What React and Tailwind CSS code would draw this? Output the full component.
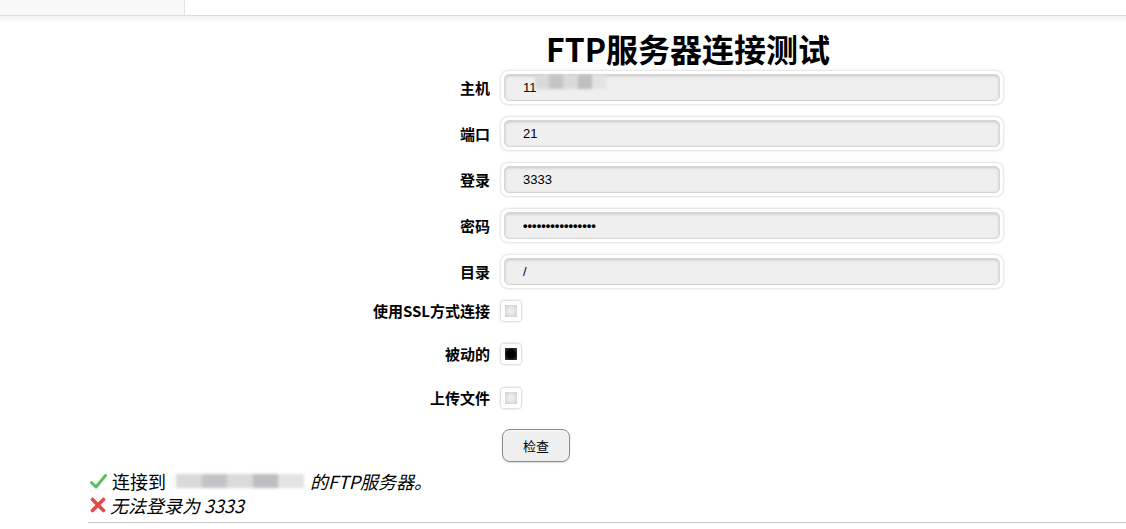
import React from 'react';

const Field = ({ label, children, className = '' }) => (
    <div className={`flex items-center ${className}`}>
        <div className="w-[122px] text-right text-[15px] leading-[20px] font-bold text-black">{label}</div>
        <div className="ml-[11px] flex">{children}</div>
    </div>
);

const TextBox = ({ children }) => (
    <div className="w-[502px] h-[33px] rounded-[7px] bg-white p-[3px] shadow-[0_0_3px_rgba(0,0,0,0.25)]">
        <div className="h-full rounded-[5px] border border-[#d6d6d6] bg-[#efefef] shadow-[inset_0_1px_3px_rgba(0,0,0,0.18)] pl-[18px] flex items-center text-[13px] text-black font-['Liberation_Sans',sans-serif]">
            {children}
        </div>
    </div>
);

const Check = ({ checked }) => (
    <div className="w-[20px] h-[20px] rounded-[3px] bg-white p-[4px] shadow-[0_0_3px_rgba(0,0,0,0.35)]">
        {checked ? (
            <div className="w-full h-full bg-[radial-gradient(circle,#000_45%,#4a4a4a_100%)]" />
        ) : (
            <div className="w-full h-full bg-[radial-gradient(circle,#ececec_25%,#cdcdcd_100%)]" />
        )}
    </div>
);

const Blur = ({ w }) => (
    <span className="inline-flex h-[14px] items-center blur-[1.5px]" style={{ width: w }}>
        <span className="h-full w-1/5 bg-[#d9d9d9]" />
        <span className="h-full w-1/5 bg-[#c4c4c8]" />
        <span className="h-full w-1/5 bg-[#dcdad6]" />
        <span className="h-full w-1/5 bg-[#bdbdc2]" />
        <span className="h-full w-1/5 bg-[#e3e3e3]" />
    </span>
);

export default function App() {
    return (
        <div className="min-h-[529px] bg-white font-['Noto_Sans_CJK_SC','Noto_Sans',sans-serif] text-black">
            {/* top tab strip */}
            <div className="flex h-[16px] border-b border-[#dcdcdc]">
                <div className="w-[185px] bg-[#f8f8f8] border-r border-[#e2e2e2]" />
                <div className="flex-1 bg-white" />
            </div>
            <div className="h-[6px] bg-gradient-to-b from-[#f2f2f2] to-white" />

            <div className="pl-[368px]">
                <div className="w-[640px]">
                    <h1 className="text-center text-[32px] font-bold leading-[40px] mt-[6px] font-['Noto_Sans_CJK_SC',sans-serif]">
                        FTP服务器连接测试
                    </h1>

                    <div className="flex flex-col mt-[3px]">
                        <Field label="主机">
                            <TextBox>
                                <span>11</span>
                                <span className="-ml-[2px] -mt-[6px]"><Blur w={72} /></span>
                            </TextBox>
                        </Field>
                        <Field label="端口" className="mt-[13px]">
                            <TextBox>21</TextBox>
                        </Field>
                        <Field label="登录" className="mt-[13px]">
                            <TextBox>3333</TextBox>
                        </Field>
                        <Field label="密码" className="mt-[13px]">
                            <TextBox><span className="text-[13px] font-bold">••••••••••••••••</span></TextBox>
                        </Field>
                        <Field label="目录" className="mt-[13px]">
                            <TextBox>/</TextBox>
                        </Field>
                        <Field label="使用SSL方式连接" className="mt-[13px]">
                            <Check />
                        </Field>
                        <Field label="被动的" className="mt-[23px]">
                            <Check checked />
                        </Field>
                        <Field label="上传文件" className="mt-[24px]">
                            <Check />
                        </Field>
                        <div className="ml-[134px] mt-[21px]">
                            <button className="w-[68px] h-[33px] rounded-[8px] border border-[#8a8a8a] bg-[#efefef] shadow-[inset_0_1px_2px_rgba(255,255,255,0.9),0_1px_2px_rgba(0,0,0,0.15)] text-[13px]">
                                检查
                            </button>
                        </div>
                    </div>
                </div>
            </div>

            {/* results */}
            <div className="ml-[88px] mt-[7px] border-b border-[#c8c8c8] pb-[5px] text-[18px] leading-[24px]">
                <div className="flex items-center">
                    <span className="w-[24px] pl-[2px] flex">
                        <svg width="17" height="15" viewBox="0 0 17 15">
                            <path d="M1.5 8.5 L6 13 L15.5 1.5" fill="none" stroke="#5cc15c" strokeWidth="3" strokeLinecap="round" strokeLinejoin="round" />
                        </svg>
                    </span>
                    <span>连接到</span>
                    <span className="ml-[10px] italic flex items-center">
                        <Blur w={128} />
                        <span className="ml-[6px]">的FTP服务器。</span>
                    </span>
                </div>
                <div className="flex items-center">
                    <span className="w-[22px] pl-[2px] flex">
                        <svg width="16" height="16" viewBox="0 0 16 16">
                            <path d="M2.5 2.5 L13.5 13.5 M13.5 2.5 L2.5 13.5" fill="none" stroke="#e64848" strokeWidth="3.6" strokeLinecap="round" />
                        </svg>
                    </span>
                    <span className="italic">无法登录为 3333</span>
                </div>
            </div>
        </div>
    );
}
